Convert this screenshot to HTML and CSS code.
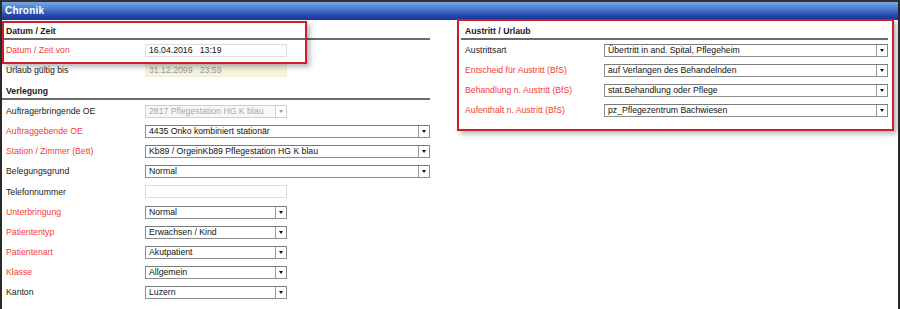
FILE: index.html
```html
<!DOCTYPE html>
<html lang="de">
<head>
<meta charset="utf-8">
<title>Chronik</title>
<link rel="stylesheet" href="styles.css">
</head>
<body>
<div class="win">
  <div class="title">Chronik</div>
  <div class="body">
    <div class="col left">
      <div class="sec-h">Datum / Zeit</div>
      <div class="row"><span class="lbl req">Datum / Zeit von</span><div class="inp narrow">16.04.2016&nbsp;&nbsp;&nbsp;13:19</div></div>
      <div class="row"><span class="lbl">Urlaub gültig bis</span><div class="inp narrow dis-y">31.12.2099&nbsp;&nbsp;&nbsp;23:59</div></div>
      <div class="sec-h sec-gap">Verlegung</div>
      <div class="row"><span class="lbl">Auftragerbringende OE</span><div class="sel narrow dis"><span class="val">2817 Pflegestation HG K blau</span><span class="arr"></span></div></div>
      <div class="row"><span class="lbl req">Auftraggebende OE</span><div class="sel wide"><span class="val">4435 Onko kombiniert stationär</span><span class="arr"></span></div></div>
      <div class="row"><span class="lbl req">Station / Zimmer (Bett)</span><div class="sel wide"><span class="val">Kb89 / OrgeinKb89 Pflegestation HG K blau</span><span class="arr"></span></div></div>
      <div class="row"><span class="lbl">Belegungsgrund</span><div class="sel wide"><span class="val">Normal</span><span class="arr"></span></div></div>
      <div class="row row-tall"><span class="lbl">Telefonnummer</span><div class="inp narrow"></div></div>
      <div class="row"><span class="lbl req">Unterbringung</span><div class="sel narrow"><span class="val">Normal</span><span class="arr"></span></div></div>
      <div class="row"><span class="lbl req">Patiententyp</span><div class="sel narrow"><span class="val">Erwachsen / Kind</span><span class="arr"></span></div></div>
      <div class="row"><span class="lbl req">Patientenart</span><div class="sel narrow"><span class="val">Akutpatient</span><span class="arr"></span></div></div>
      <div class="row"><span class="lbl req">Klasse</span><div class="sel narrow"><span class="val">Allgemein</span><span class="arr"></span></div></div>
      <div class="row"><span class="lbl">Kanton</span><div class="sel narrow"><span class="val">Luzern</span><span class="arr"></span></div></div>
    </div>
    <div class="col right">
      <div class="sec-h">Austritt / Urlaub</div>
      <div class="row"><span class="lbl">Austrittsart</span><div class="sel wide"><span class="val">Übertritt in and. Spital, Pflegeheim</span><span class="arr"></span></div></div>
      <div class="row"><span class="lbl req">Entscheid für Austritt (BfS)</span><div class="sel wide"><span class="val">auf Verlangen des Behandelnden</span><span class="arr"></span></div></div>
      <div class="row"><span class="lbl req">Behandlung n. Austritt (BfS)</span><div class="sel wide"><span class="val">stat.Behandlung oder Pflege</span><span class="arr"></span></div></div>
      <div class="row"><span class="lbl req">Aufenthalt n. Austritt (BfS)</span><div class="sel wide"><span class="val">pz_Pflegezentrum Bachwiesen</span><span class="arr"></span></div></div>
    </div>
  </div>
  <div class="mark m1"></div>
  <div class="mark m2"></div>
</div>
</body>
</html>
```
FILE: styles.css
```css
html, body {
  margin: 0;
  padding: 0;
  background: #fff;
}
body {
  font-family: "Liberation Sans", Arial, sans-serif;
  font-size: 8.7px;
  color: #1a1a1a;
}
.win {
  position: relative;
  width: 900px;
  height: 309px;
  box-sizing: border-box;
  border-left: 2px solid #2a2a2a;
  border-right: 2px solid #2a2a2a;
  background: #fff;
  overflow: hidden;
}
.title {
  height: 20px;
  box-sizing: border-box;
  border-top: 2px solid #333;
  background: linear-gradient(to bottom, #7aa6e4 0%, #4f7fd0 35%, #2547ab 75%, #1a3794 100%);
  color: #fff;
  font-weight: bold;
  font-size: 10px;
  line-height: 17px;
  padding-left: 3px;
  letter-spacing: 0.2px;
}
.body {
  display: flex;
}
.col.left {
  width: 428px;
}
.col.right {
  width: 427px;
  margin-left: 31px;
}
.sec-h {
  font-weight: bold;
  color: #1a1a1a;
  height: 14px;
  line-height: 14px;
  padding: 4px 0 0 4px;
  border-bottom: 2px solid #6a6a6a;
}
.sec-gap {
  margin-bottom: 1px;
}
.row {
  display: flex;
  align-items: center;
  height: 20px;
}
.row-tall {
  height: 21px;
}
.lbl {
  width: 139px;
  padding-left: 4px;
  flex: none;
  white-space: nowrap;
}
.lbl.req {
  color: #f23a3a;
}
.inp, .sel {
  box-sizing: border-box;
  height: 13px;
  line-height: 11px;
  font-size: 8.7px;
  color: #111;
  white-space: nowrap;
  overflow: hidden;
}
.narrow { width: 142px; }
.wide { width: 285px; }
.inp {
  border: 1px solid #dcdcdc;
  padding-left: 3px;
  background: #fff;
}
.inp.dis-y {
  background: #f3f3de;
  border-color: #eeeed8;
  color: #9a9a9a;
}
.sel {
  display: flex;
  border: 1px solid #8c8c8c;
  border-top-color: #7a7a7a;
  background: #fff;
}
.sel .val {
  flex: 1;
  padding-left: 3px;
  overflow: hidden;
}
.sel .arr {
  flex: none;
  width: 10px;
  border-left: 1px solid #9a9a9a;
  position: relative;
}
.sel .arr::after {
  content: "";
  position: absolute;
  left: 3px;
  top: 4px;
  border-left: 2.5px solid transparent;
  border-right: 2.5px solid transparent;
  border-top: 3px solid #111;
}
.sel.dis {
  border-color: #cfcfcf;
  color: #a8a8a8;
  background: #f7f7f7;
}
.sel.dis .arr {
  border-left-color: #d0d0d0;
  background: #fff;
}
.sel.dis .arr::after {
  border-top-color: #999;
}
.mark {
  position: absolute;
  box-sizing: border-box;
  border: 2px solid #cc1f2b;
  box-shadow: 3px 3px 5px rgba(0, 0, 0, 0.28);
}
.m1 {
  left: 0;
  top: 21px;
  width: 305px;
  height: 43px;
}
.m2 {
  left: 455px;
  top: 19px;
  width: 437px;
  height: 112px;
}
```
